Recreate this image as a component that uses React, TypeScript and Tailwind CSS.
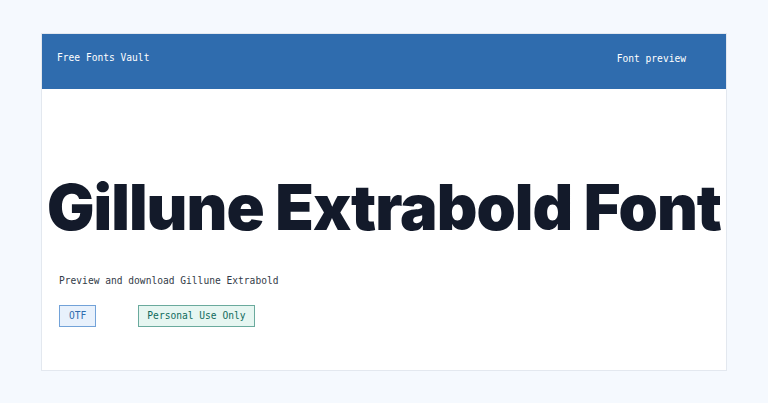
import React from "react";

const mono = { fontFamily: '"DejaVu Sans Mono", "Liberation Mono", monospace' };

export default function App() {
  return (
    <div className="h-[403px] w-full overflow-hidden bg-[#f5f9fe] pt-[33px] pl-[41px]">
      <div className="w-[686px] overflow-hidden border border-[#e3e8ef] bg-white">
        <header
          className="flex h-[55px] items-center justify-between bg-[#2f6cae] pl-[15px] pr-[40px] text-[9.6px] text-white"
          style={mono}
        >
          <span className="-mt-[7px]">Free Fonts Vault</span>
          <span className="-mt-[5px]">Font preview</span>
        </header>
        <div className="flex h-[281px] flex-col px-[17px]">
          <h1
            className="mt-[80px] flex justify-center whitespace-nowrap text-[63px] font-black leading-[76px] tracking-[-0.95px] text-[#131a2a]"
            style={{ fontFamily: 'Inter, "Noto Sans", sans-serif' }}
          >
            Gillune Extrabold Font
          </h1>
          <p className="mt-[29px] text-[9.6px] leading-[14px] text-[#333b48]" style={mono}>
            Preview and download Gillune Extrabold
          </p>
          <div className="mt-[17px] flex gap-[42px] text-[9.6px]" style={mono}>
            <span className="flex h-[22px] items-center border border-[#72a2d8] bg-[#e8f1fc] px-[9px] text-[#2f6cae]">
              OTF
            </span>
            <span className="flex h-[22px] items-center border border-[#6aaa9d] bg-[#e6f6f1] px-[8px] text-[#0f6b5c]">
              Personal Use Only
            </span>
          </div>
        </div>
      </div>
    </div>
  );
}
